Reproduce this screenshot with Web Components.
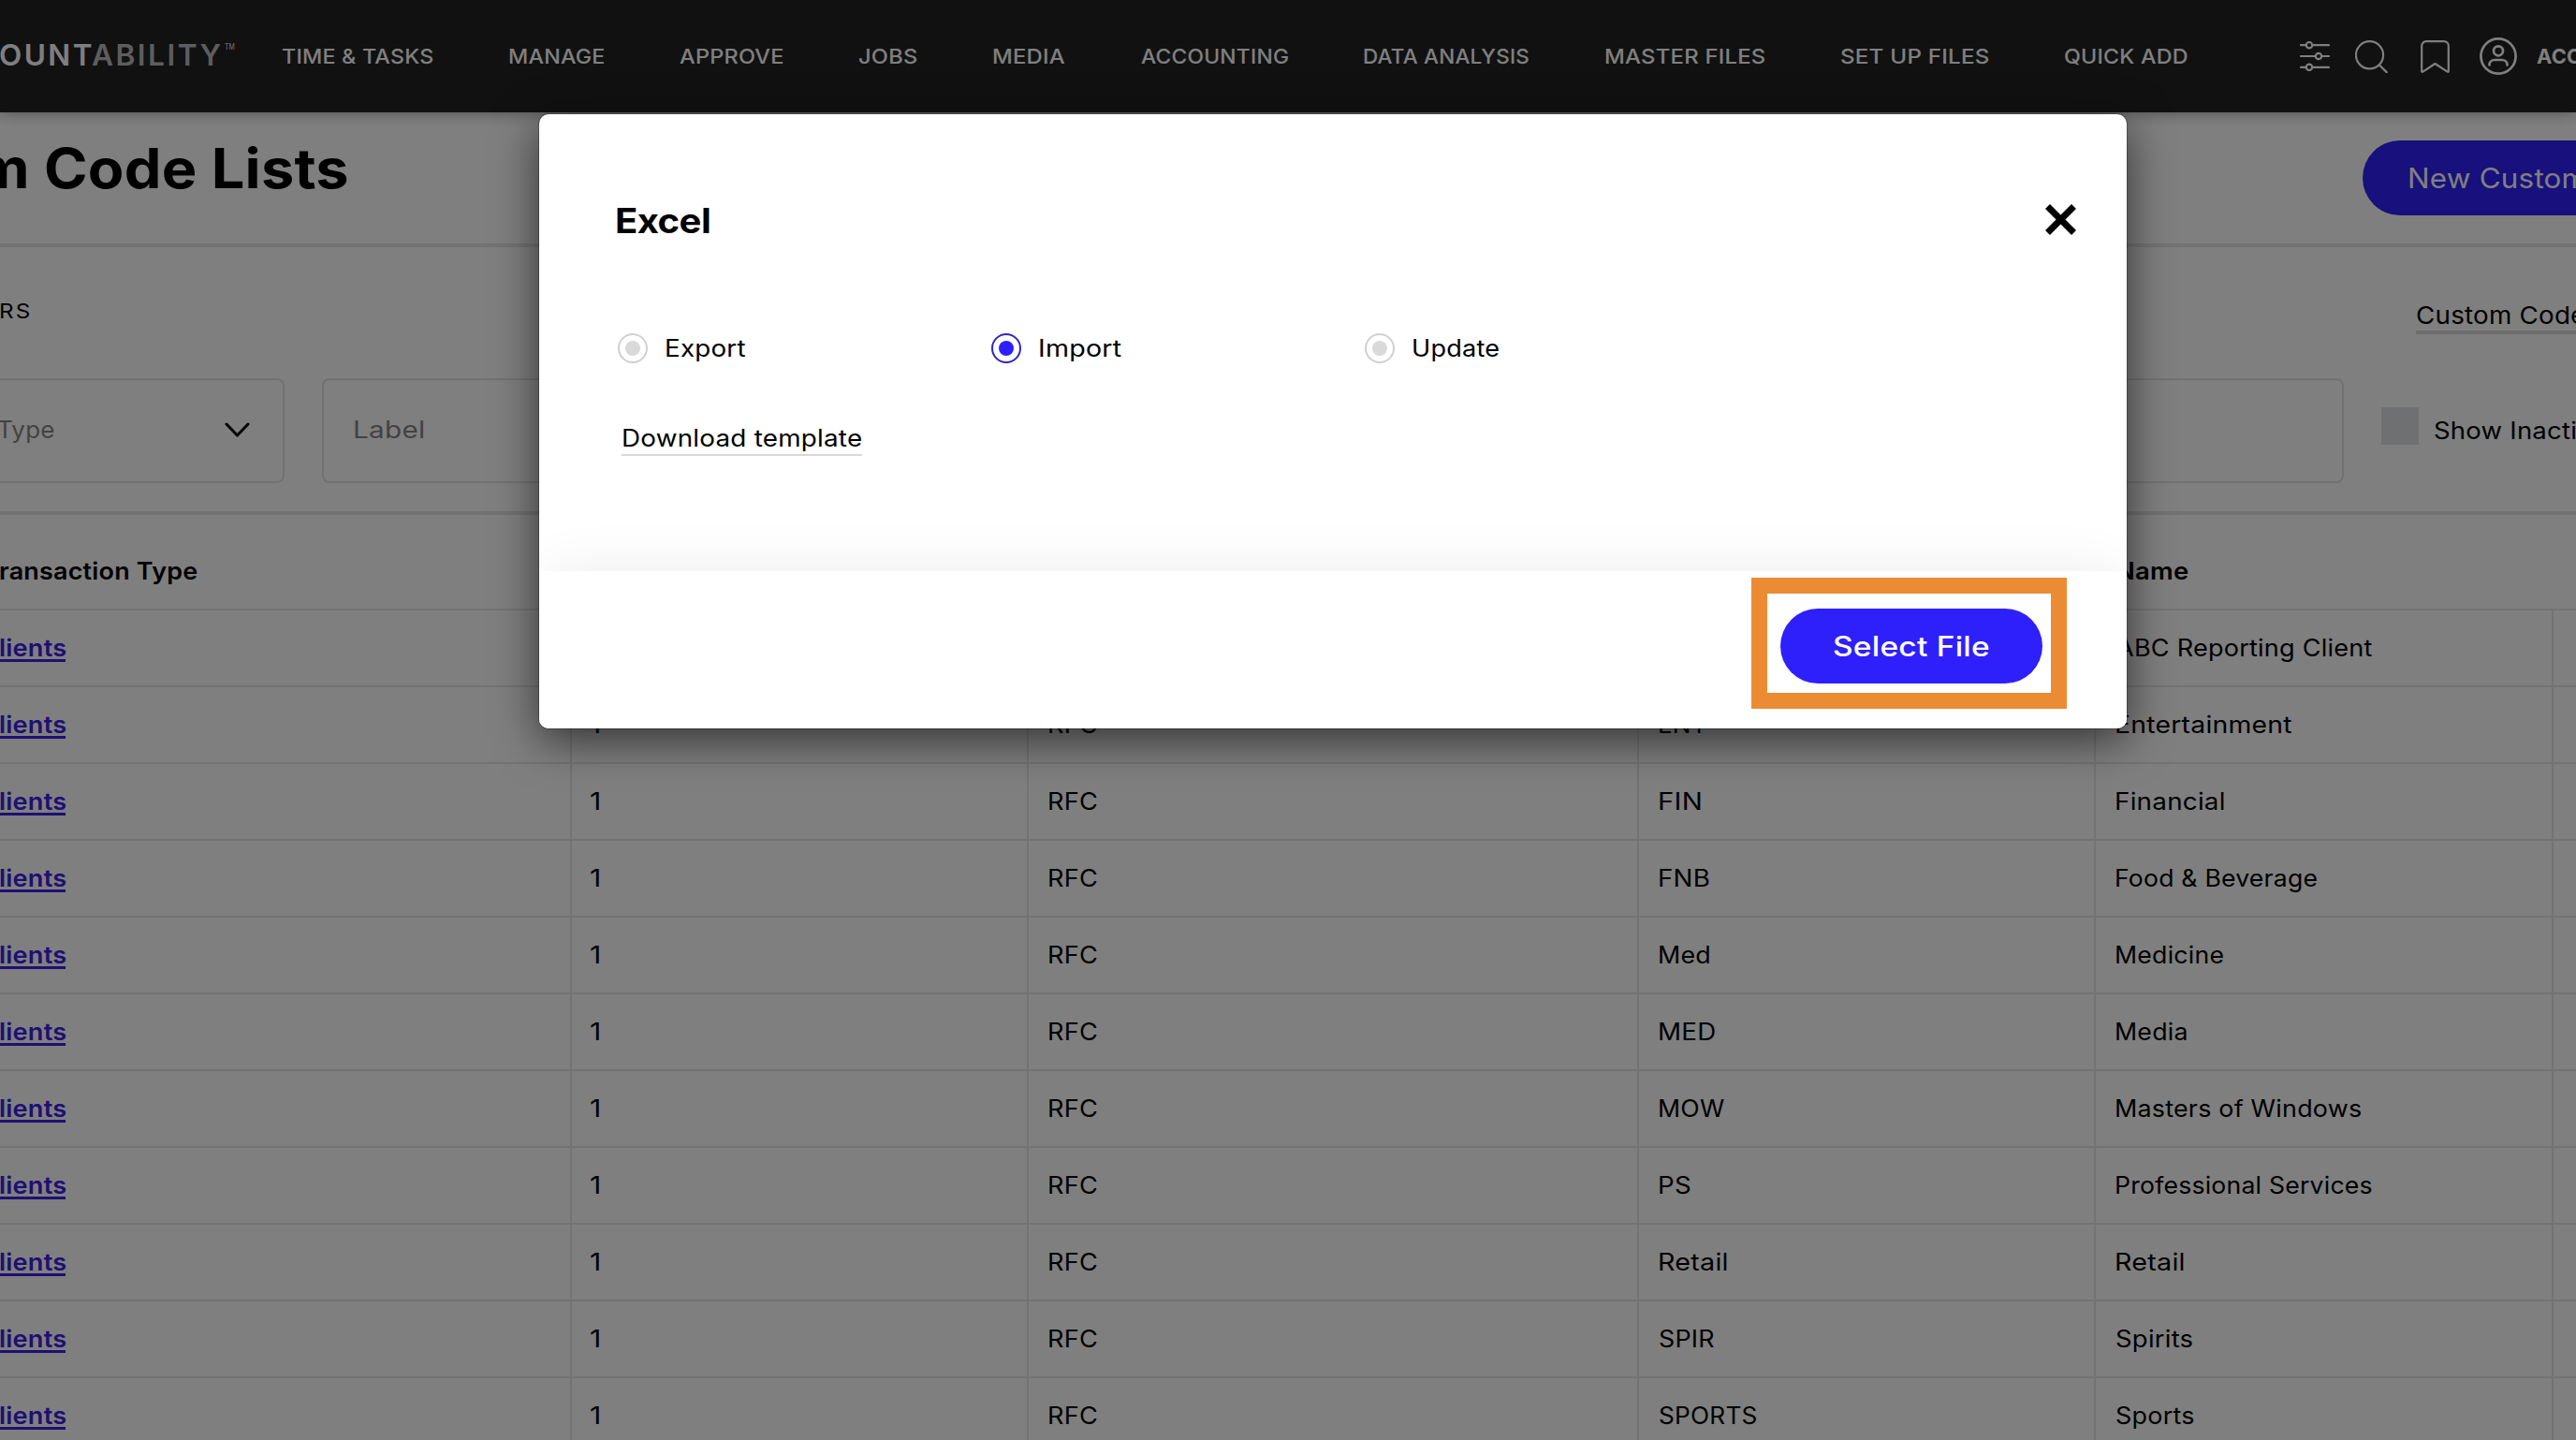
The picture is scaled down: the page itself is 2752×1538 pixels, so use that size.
<!DOCTYPE html>
<html lang="en">
<head>
<meta charset="utf-8">
<title>Custom Code Lists</title>
<style>
    html, body {
        margin: 0;
        height: 100%;
        overflow: hidden;
    }

    body {
        position: relative;
        background: #fff;
        color: #000;
        font: 400 25.5px/40px Inter, "Liberation Sans", sans-serif;
        letter-spacing: .2px;
    }
</style>
</head>
<body>
    <app-header></app-header>
    <page-title></page-title>
    <filter-bar></filter-bar>
    <code-table></code-table>
    <excel-modal></excel-modal>

<script>
class AppHeader extends HTMLElement {
    connectedCallback() {
        let items = [
            ['TIME &amp; TASKS', 162], ['MANAGE', 101], ['APPROVE', 110], ['JOBS', 63], ['MEDIA', 77],
            ['ACCOUNTING', 157.5], ['DATA ANALYSIS', 176.5], ['MASTER FILES', 171],
            ['SET UP FILES', 158], ['QUICK ADD', 130.5]
        ]
        let shadowRoot = this.attachShadow({mode: 'open'})
        shadowRoot.innerHTML = `
        <style>
            :host {
                display: flex;
                align-items: center;
                position: relative;
                z-index: 1;
                height: 120px;
                background: #222;
                color: #fff;
                box-shadow: 0 0 16px rgba(0, 0, 0, .4);
                font-size: 22px;
                font-weight: 550;
                white-space: nowrap;
            }

            .brand {
                display: flex;
                flex: none;
                width: 252px;
                margin-bottom: 3px;
                font-size: 31px;
                font-weight: 600;
                letter-spacing: 2.4px;
            }

            .brand--second {
                color: #bbb;
            }

            .brand--tm {
                margin-left: 4px;
                font-size: 8.5px;
                letter-spacing: 0;
                line-height: 22px;
                color: #ccc;
                font-weight: 500;
            }

            nav {
                display: flex;
                flex: none;
                gap: 81px;
                margin-left: 49px;
            }

            .tools {
                display: flex;
                flex: none;
                align-items: center;
                margin-left: 120.5px;
            }

            svg {
                display: block;
                flex: none;
                fill: none;
                stroke: #fff;
                stroke-width: 2.2;
                stroke-linecap: round;
                stroke-linejoin: round;
            }

            .search { margin-left: 27px }
            .bookmark { margin-left: 35px }
            .user { margin-left: 32px; stroke-width: 2.7 }
            .account { margin-left: 21px; font-weight: 700 }
        </style>

        <div class="brand">
            <text-run w="98">OUNT</text-run>
            <text-run class="brand--second" w="138">ABILITY</text-run>
            <text-run class="brand--tm" w="11">TM</text-run>
        </div>
        <nav>${items.map(i => `<text-run w="${i[1]}">${i[0]}</text-run>`).join('')}</nav>
        <div class="tools">
            <svg width="32" height="32" viewBox="0 0 32 32">
                <path d="M1 4.2h5.5M13.5 4.2H31M1 16h15.5M23.5 16H31M1 27.8h5.5M13.5 27.8H31"/>
                <circle cx="10" cy="4.2" r="3.2"/><circle cx="20" cy="16" r="3.2"/><circle cx="10" cy="27.8" r="3.2"/>
            </svg>
            <svg class="search" width="35" height="35" viewBox="0 0 35 35">
                <circle cx="15.5" cy="15.8" r="14.6"/><path d="M26 26.5l7.7 7.6"/>
            </svg>
            <svg class="bookmark" width="31" height="35" viewBox="0 0 31 35">
                <path d="M1.2 33V6A4.8 4.8 0 0 1 6 1.2h19A4.8 4.8 0 0 1 29.8 6v27q0 1.3-1.2.6L15.5 25 2.4 33.6q-1.2.7-1.2-.6z"/>
            </svg>
            <svg class="user" width="40" height="40" viewBox="0 0 40 40">
                <circle cx="20" cy="20" r="18.6"/><circle cx="20" cy="14.3" r="5"/>
                <path d="M10.5 29.5c0-4 3-5.500 5.500-5.500h8c2.500 0 5.500 1.500 5.500 5.500"/>
            </svg>
            <text-run class="account" w="48">ACC</text-run>
        </div>
        `
    }
}

class PageTitle extends HTMLElement {
    connectedCallback() {
        let shadowRoot = this.attachShadow({mode: 'open'})
        shadowRoot.innerHTML = `
        <style>
            :host {
                display: flex;
                justify-content: space-between;
                align-items: center;
                height: 140px;
                border-bottom: 4px solid #e6e6e6;
            }

            h1 {
                margin: 0 0 20px -23px;
                font-size: 58.5px;
                line-height: 80px;
                font-weight: 650;
            }

            .button {
                flex: none;
                box-sizing: border-box;
                width: 228px;
                height: 80px;
                padding-left: 50px;
                overflow: hidden;
                border-radius: 40px 0 0 40px;
                background: #2e20fb;
                color: #fff;
                font-size: 29.5px;
                line-height: 80px;
            }
        </style>

        <h1><text-run w="393.5">m Code Lists</text-run></h1>
        <div class="button"><text-run w="188">New Custom</text-run></div>
        `
    }
}

class FilterBar extends HTMLElement {
    connectedCallback() {
        let shadowRoot = this.attachShadow({mode: 'open'})
        shadowRoot.innerHTML = `
        <style>
            :host {
                display: flex;
                flex-direction: column;
                box-sizing: border-box;
                height: 286px;
                border-bottom: 4px solid #e1e4e8;
            }

            .top {
                display: flex;
                justify-content: space-between;
                height: 140px;
            }

            .caption {
                margin-top: 48px;
                font-size: 22px;
                letter-spacing: 2px;
            }

            .link {
                width: 170px;
                height: 36px;
                margin-top: 53px;
                padding-left: 1px;
                overflow: hidden;
                border-bottom: 4px solid #dcdcdc;
                font-size: 26px;
            }

            .fields {
                display: flex;
                align-items: center;
            }

            .field {
                display: flex;
                align-items: center;
                box-sizing: border-box;
                height: 112px;
                padding-bottom: 2px;
                border: 2px solid #e2e2e4;
                border-radius: 8px;
                color: #858585;
            }

            .type {
                justify-content: space-between;
                width: 304px;
                padding-right: 35px;
                border-left: 0;
                border-radius: 0 8px 8px 0;
            }

            .type text-run {
                margin-left: -1.5px;
            }

            .label {
                width: 2160px;
                margin-left: 40px;
                padding-left: 33.5px;
            }

            .box {
                width: 40px;
                height: 40px;
                margin: 0 17px 10px 40px;
                background: #dfe1e4;
            }
        </style>

        <div class="top">
            <text-run class="caption" w="31">RS</text-run>
            <div class="link"><text-run w="179">Custom Code</text-run></div>
        </div>
        <div class="fields">
            <div class="field type">
                <text-run w="59.5">Type</text-run>
                <svg width="27" height="17" viewBox="0 0 27 17" fill="none" stroke="#000" stroke-width="3" stroke-linecap="round" stroke-linejoin="round"><path d="M2 2l11.500 12L25 2"/></svg>
            </div>
            <div class="field label"><text-run w="73.5">Label</text-run></div>
            <div class="box"></div>
            <text-run w="150.5">Show Inacti</text-run>
        </div>
        `
    }
}

class CodeTable extends HTMLElement {
    connectedCallback() {
        // [code, code width, name, name width]
        let rows = [
            ['', 0, 'ABC Reporting Client', 273],
            ['ENT', 50, 'Entertainment', 187],
            ['FIN', 43, 'Financial', 115],
            ['FNB', 53, 'Food &amp; Beverage', 214],
            ['Med', 53, 'Medicine', 114],
            ['MED', 58.5, 'Media', 75],
            ['MOW', 69, 'Masters of Windows', 261.5],
            ['PS', 32, 'Professional Services', 273],
            ['Retail', 72, 'Retail', 72],
            ['SPIR', 58, 'Spirits', 81.5],
            ['SPORTS', 103, 'Sports', 83]
        ]
        let shadowRoot = this.attachShadow({mode: 'open'})
        shadowRoot.innerHTML = `
        <style>
            :host {
                display: block;
            }

            .row {
                display: grid;
                grid-template-columns: 611px 488px 652px 488px 489px 1fr;
                height: 80px;
                border-bottom: 2px solid #e6e6e6;
            }

            .row > div {
                display: flex;
                align-items: center;
                padding-left: 22px;
                border-right: 2px solid #e6e6e6;
            }

            .row > div:first-child {
                padding-left: 0;
            }

            .row > div:nth-child(2) {
                padding-left: 20px;
            }

            .row > div:last-child {
                border-right: 0;
            }

            .head {
                height: 81px;
                padding-top: 19px;
                font-weight: 600;
            }

            .head > div {
                border-right-color: transparent;
            }

            .link {
                color: #3c20e6;
                font-weight: 600;
                border-bottom: 3px solid #3c20e6;
                line-height: 25px;
                margin-top: 2px;
            }
        </style>

        <div class="row head">
            <div><text-run w="211">ransaction Type</text-run></div>
            <div></div><div></div><div></div>
            <div><text-run w="77">Name</text-run></div>
            <div></div>
        </div>
        ${rows.map((r, i) => `
        <div class="row">
            <div><text-run class="link" w="70">lients</text-run></div>
            <div>${i ? '<text-run w="9.5">1</text-run>' : ''}</div>
            <div>${i ? '<text-run w="51">RFC</text-run>' : ''}</div>
            <div>${i ? `<text-run w="${r[1]}">${r[0]}</text-run>` : ''}</div>
            <div><text-run w="${r[3]}">${r[2]}</text-run></div>
            <div></div>
        </div>`).join('')}
        `
    }
}

class RadioOption extends HTMLElement {
    connectedCallback() {
        let shadowRoot = this.attachShadow({mode: 'open'})
        shadowRoot.innerHTML = `
        <style>
            :host {
                display: flex;
                align-items: center;
                gap: 20px;
                width: 399px;
                --ring: #d0d0d0;
                --dot: #d9d9d9;
            }

            :host([checked]) {
                --ring: #2f26c4;
                --dot: #2e20fb;
            }

            .ring {
                display: grid;
                place-items: center;
                box-sizing: border-box;
                width: 32px;
                height: 32px;
                border: 2px solid var(--ring);
                border-radius: 50%;
            }

            .ring::before {
                content: '';
                width: 16px;
                height: 16px;
                border-radius: 50%;
                background: var(--dot);
            }
        </style>

        <div class="ring"></div>
        <slot></slot>
        `
    }
}

class ExcelModal extends HTMLElement {
    connectedCallback() {
        let shadowRoot = this.attachShadow({mode: 'open'})
        shadowRoot.innerHTML = `
        <style>
            :host {
                position: absolute;
                inset: 0;
                z-index: 2;
                background: rgba(0, 0, 0, .5);
            }

            .dialog {
                position: absolute;
                left: 576px;
                top: 122px;
                width: 1696px;
                height: 656px;
                border-radius: 10px;
                background: #fff;
                box-shadow: 0 0 0 1px rgba(0, 0, 0, .25), 0 12px 48px rgba(0, 0, 0, .6);
            }

            .content {
                display: flex;
                flex-direction: column;
                height: 100%;
                overflow: hidden;
                border-radius: 10px;
            }

            .title {
                display: flex;
                justify-content: space-between;
                align-items: center;
                height: 60px;
                margin: 84px 54.5px 0 83px;
                font-size: 36.5px;
                font-weight: 650;
                letter-spacing: -.5px;
            }

            .title svg {
                margin-bottom: 3px;
            }

            .options {
                display: flex;
                margin: 86px 0 0 84px;
            }

            .template {
                align-self: flex-start;
                box-sizing: border-box;
                width: 257px;
                height: 39px;
                margin: 56px 0 0 88px;
                padding-left: 2px;
                border-bottom: 2px solid #d9d9d9;
            }

            footer {
                display: flex;
                justify-content: flex-end;
                box-sizing: border-box;
                height: 168px;
                margin-top: auto;
                padding: 7px 64px 0 0;
                background: #fff;
                box-shadow: 0 -10px 60px -10px rgba(0, 0, 0, .08);
            }

            .highlight {
                box-sizing: border-box;
                width: 337px;
                height: 140px;
                padding: 16px 0 0 14px;
                border: 17px solid #eb8c34;
            }

            .button {
                width: 280px;
                height: 80px;
                border-radius: 40px;
                background: #2e20fb;
                color: #fff;
                font-size: 29.5px;
                font-weight: 500;
                line-height: 80px;
                text-align: center;
            }
        </style>

        <div class="dialog">
            <div class="content">
                <div class="title">
                    <text-run w="98.5">Excel</text-run>
                    <svg width="33" height="33" viewBox="0 0 33 33" stroke="#000" stroke-width="7"><path d="M2.500 2.500l28 28M30.500 2.500l-28 28"/></svg>
                </div>
                <div class="options">
                    <radio-option><text-run w="84">Export</text-run></radio-option>
                    <radio-option checked><text-run w="86.5">Import</text-run></radio-option>
                    <radio-option><text-run w="91">Update</text-run></radio-option>
                </div>
                <div class="template"><text-run w="254">Download template</text-run></div>
                <footer>
                    <div class="highlight">
                        <div class="button"><text-run w="165">Select File</text-run></div>
                    </div>
                </footer>
            </div>
        </div>
        `
    }
}

// one line of text, stretched so that its ink fills exactly w pixels
class TextRun extends HTMLElement {
    connectedCallback() {
        let shadowRoot = this.attachShadow({mode: 'open'})
        shadowRoot.innerHTML = `
        <style>
            :host {
                display: inline-block;
                flex: none;
                vertical-align: top;
                white-space: nowrap;
                text-align: left;
            }

            span {
                display: inline-block;
                vertical-align: top;
                transform-origin: 0 50%;
            }
        </style>
        <span><slot></slot></span>
        `
        let w = Number(this.getAttribute('w'))
        let style = getComputedStyle(this)
        let spacing = parseFloat(style.letterSpacing) || 0
        let ctx = document.createElement('canvas').getContext('2d')
        ctx.font = `${style.fontWeight} ${style.fontSize} ${style.fontFamily}`
        let m = ctx.measureText(this.textContent)
        let span = shadowRoot.querySelector('span')
        let left = -m.actualBoundingBoxLeft
        let right = m.width - m.actualBoundingBoxRight
        let ink = span.getBoundingClientRect().width - spacing - left - right
        let scale = w / ink
        this.style.width = w + 'px'
        span.style.marginLeft = -left * scale + 'px'
        span.style.transform = `scaleX(${scale})`
    }
}

window.customElements.define('app-header', AppHeader);
window.customElements.define('page-title', PageTitle);
window.customElements.define('filter-bar', FilterBar);
window.customElements.define('code-table', CodeTable);
window.customElements.define('radio-option', RadioOption);
window.customElements.define('excel-modal', ExcelModal);
window.customElements.define('text-run', TextRun);
</script>
</body>
</html>
